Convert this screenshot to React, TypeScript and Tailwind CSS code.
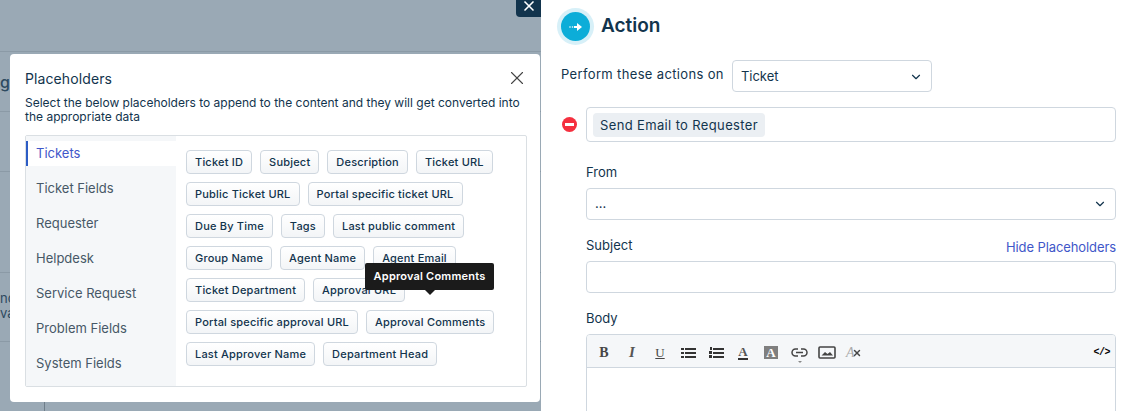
import React from 'react';
import { X, ChevronDown } from 'lucide-react';

const categories = ['Tickets', 'Ticket Fields', 'Requester', 'Helpdesk', 'Service Request', 'Problem Fields', 'System Fields'];

const chipRows = [
  ['Ticket ID', 'Subject', 'Description', 'Ticket URL'],
  ['Public Ticket URL', 'Portal specific ticket URL'],
  ['Due By Time', 'Tags', 'Last public comment'],
  ['Group Name', 'Agent Name', 'Agent Email'],
  ['Ticket Department', 'Approval URL'],
  ['Portal specific approval URL', 'Approval Comments'],
  ['Last Approver Name', 'Department Head'],
];

function Chip({ label }: { label: string }) {
  return (
    <span className="h-[24px] px-[8px] flex items-center rounded-[4px] border border-[#cfd7df] bg-gradient-to-b from-white to-[#f3f5f7] text-[11px] font-medium tracking-[0.2px] text-[#12344d] whitespace-nowrap">
      {label}
    </span>
  );
}

function Toolbar() {
  return (
    <div className="h-[33px] bg-[#f5f7f9] border-b border-[#cfd7df] flex items-center pt-[3px] pl-[11px] pr-[5px] text-[#464646]">
      <span className="w-[12px] text-[14px] font-bold font-['Liberation_Serif'] text-center leading-none">B</span>
      <span className="w-[12px] ml-[16px] text-[15px] italic font-bold font-['Liberation_Serif'] text-center leading-none text-[#555]">I</span>
      <span className="w-[12px] ml-[16px] text-[13px] underline font-['Liberation_Serif'] text-center leading-none">U</span>
      <svg className="ml-[15px]" width="16" height="12" viewBox="0 0 16 12" fill="#333">
        <rect x="0" y="1" width="3" height="2" /><rect x="4" y="1" width="11" height="2" />
        <rect x="0" y="5" width="3" height="2" /><rect x="4" y="5" width="11" height="2" />
        <rect x="0" y="9" width="3" height="2" /><rect x="4" y="9" width="11" height="2" />
      </svg>
      <svg className="ml-[12px]" width="16" height="12" viewBox="0 0 16 12" fill="#333">
        <rect x="1" y="0" width="2" height="3" /><rect x="0" y="4" width="3" height="3" /><rect x="0" y="8" width="3" height="3" />
        <rect x="4" y="1" width="11" height="2" /><rect x="4" y="5" width="11" height="2" /><rect x="4" y="9" width="11" height="2" />
      </svg>
      <span className="ml-[11px] w-[14px] flex flex-col items-center">
        <span className="text-[13px] leading-[11px] font-bold font-['Liberation_Serif'] text-[#555]">A</span>
        <span className="mt-[1px] w-[10px] h-[2px] bg-[#333]" />
      </span>
      <span className="ml-[14px] w-[14px] h-[13px] bg-[#7f7f7f] flex items-center justify-center text-[13px] leading-none font-bold font-['Liberation_Serif'] text-white">A</span>
      <span className="ml-[13px] relative flex items-center">
        <svg width="17" height="9" viewBox="0 0 17 9" fill="none" stroke="#444" strokeWidth="1.5">
          <path d="M7 1 H4.5 a3.5 3.5 0 0 0 0 7 H7" />
          <path d="M10 1 H12.5 a3.5 3.5 0 0 1 0 7 H10" />
          <path d="M5 4.5 H12" />
        </svg>
        <span className="absolute left-[7px] top-[13px] border-x-[2px] border-t-[2px] border-x-transparent border-t-[#888]" />
      </span>
      <svg className="ml-[10px]" width="18" height="13" viewBox="0 0 18 13">
        <rect x="1" y="1" width="16" height="11" rx="1" fill="none" stroke="#444" strokeWidth="1.6" />
        <path d="M3.5 9.5 L7 6 L9.5 8 L12 6 L15 9.5 Z" fill="#444" />
      </svg>
      <span className="ml-[10px] w-[17px] relative flex items-center">
        <span className="text-[14px] leading-none italic font-['Liberation_Serif'] text-[#aaa]">A</span>
        <X size={10} strokeWidth={3.5} className="text-[#444] -ml-[3px]" />
      </span>
      <span className="ml-auto text-[10px] font-bold font-['Liberation_Mono'] tracking-[-0.5px] text-black">&lt;/&gt;</span>
    </div>
  );
}

export default function App() {
  return (
    <div className="w-[1136px] h-[411px] overflow-hidden flex bg-white font-['Inter',sans-serif] text-[#12344d]">
      {/* Dimmed page behind the modal */}
      <div className="relative w-[541px] shrink-0 bg-[#9aa9b5] text-[#12344d]">
        <div className="h-[52px] border-b border-[#8b9aa6]" />
        <div className="h-[60px] border-b border-[#8b9aa6] flex items-center">
          <span className="w-[10px] overflow-hidden flex justify-end text-[16px] font-medium text-[#2d4a60]">ng</span>
        </div>
        <div className="h-[60px] border-b border-[#8b9aa6]" />
        <div className="h-[101px] border-b border-[#8b9aa6]" />
        <div className="h-[69px] border-b border-[#8b9aa6] pt-[18px]">
          <span className="block w-[10px] overflow-hidden text-[13px] leading-[15px] text-[#2d4a60]">nc va</span>
        </div>
        <div className="ml-[44px] h-[70px] border-l border-[#6f7e8a]" />

        <div className="absolute right-0 top-0 w-[25px] h-[17px] bg-[#12344d] rounded-bl-[4px] flex items-center justify-center">
          <X size={16} strokeWidth={2.5} className="text-white -mt-[5px]" />
        </div>

        {/* Placeholders modal */}
        <div className="absolute left-[10px] top-[54px] w-[530px] h-[348px] bg-white rounded-[4px] pt-[15px] px-[15px]">
          <div className="flex items-start justify-between">
            <h2 className="text-[14px] leading-[20px] tracking-[0.1px]">Placeholders</h2>
            <X size={22} strokeWidth={1.2} className="text-[#444] -mr-[3px] -mt-[2px]" />
          </div>
          <p className="mt-[7px] text-[12px] leading-[14px] text-[#12344d]">
            Select the below placeholders to append to the content and they will get converted into the appropriate data
          </p>
          <div className="mt-[11px] h-[252px] w-[502px] border border-[#dadfe3] rounded-[2px] flex">
            <ul className="w-[150px] shrink-0 bg-[#f5f7f9] pt-[5px]">
              {categories.map((c, i) => (
                <li
                  key={c}
                  className={
                    i === 0
                      ? 'h-[25px] mb-[10px] flex items-center pl-[8px] bg-white border-l-2 border-[#2c5cc5] text-[13px] text-[#3f57c9]'
                      : 'h-[25px] mb-[10px] flex items-center pl-[10px] text-[13px] text-[#475867]'
                  }
                >
                  {c}
                </li>
              ))}
            </ul>
            <div className="pt-[14px] pl-[10px] flex flex-col gap-[8px]">
              {chipRows.map((row, i) => (
                <div key={i} className="flex gap-[8px]">
                  {row.map(label => <Chip key={label} label={label} />)}
                </div>
              ))}
            </div>
          </div>

          <div className="absolute left-[355px] top-[209px] w-[129px] h-[27px] bg-[#1b1b1b] rounded-[2px] flex items-center justify-center text-[11px] font-semibold tracking-[0.2px] text-white">
            Approval Comments
            <span className="absolute left-1/2 -translate-x-1/2 top-full border-x-[5px] border-t-[5px] border-x-transparent border-t-[#1b1b1b]" />
          </div>
        </div>
      </div>

      {/* Action form */}
      <div className="flex-1 pl-[16px] pr-[20px] pt-[8px] text-[#12344d]">
        <div className="flex items-center">
          <div className="w-[37px] h-[37px] rounded-full bg-[#d7f0f8] flex items-center justify-center">
            <div className="w-[29px] h-[29px] rounded-full bg-[#0cadd8] flex items-center justify-center">
              <svg width="14" height="10" viewBox="0 0 14 10" fill="white">
                <circle cx="1" cy="5" r="0.8" /><circle cx="3.5" cy="5" r="0.8" />
                <path d="M5 4 H8 V1 L13 5 L8 9 V6 H5 Z" />
              </svg>
            </div>
          </div>
          <h1 className="ml-[7px] -mt-[1px] text-[19px] font-semibold">Action</h1>
        </div>

        <div className="mt-[15px] ml-[4px] flex items-center">
          <span className="text-[13px] tracking-[0.35px] -mt-[3px]">Perform these actions on</span>
          <div className="ml-[8px] w-[200px] h-[32px] border border-[#cfd7df] rounded-[4px] flex items-center justify-between pt-[1px] pl-[8px] pr-[8px] text-[13px]">
            Ticket
            <ChevronDown size={14} strokeWidth={2} />
          </div>
        </div>

        <div className="mt-[15px] flex items-center">
          <div className="ml-[5px] w-[15px] h-[15px] rounded-full bg-[#f5303f] flex items-center justify-center">
            <span className="w-[9px] h-[3px] bg-white" />
          </div>
          <div className="ml-[9px] w-[530px] h-[35px] border border-[#cfd7df] rounded-[4px] flex items-center pl-[6px]">
            <span className="h-[24px] px-[7px] pt-[2px] rounded-[4px] bg-[#ebeff3] flex items-center text-[13px] tracking-[0.36px]">Send Email to Requester</span>
          </div>
        </div>

        <div className="ml-[29px] w-[530px]">
          <label className="block mt-[21px] text-[13px] leading-[18px]">From</label>
          <div className="mt-[7px] h-[32px] border border-[#cfd7df] rounded-[4px] flex items-center justify-between pl-[8px] pr-[8px] text-[13px]">
            ...
            <ChevronDown size={14} strokeWidth={2} />
          </div>
          <div className="mt-[16px] flex items-end justify-between">
            <label className="text-[13px] leading-[18px]">Subject</label>
            <span className="-mb-[1px] text-[13px] leading-[16px] tracking-[-0.1px] text-[#3f57c9]">Hide Placeholders</span>
          </div>
          <div className="mt-[7px] h-[32px] border border-[#cfd7df] rounded-[4px]" />
          <label className="block mt-[16px] text-[13px] leading-[18px]">Body</label>
          <div className="mt-[7px] h-[120px] border border-[#cfd7df] rounded-[4px] overflow-hidden">
            <Toolbar />
          </div>
        </div>
      </div>
    </div>
  );
}
